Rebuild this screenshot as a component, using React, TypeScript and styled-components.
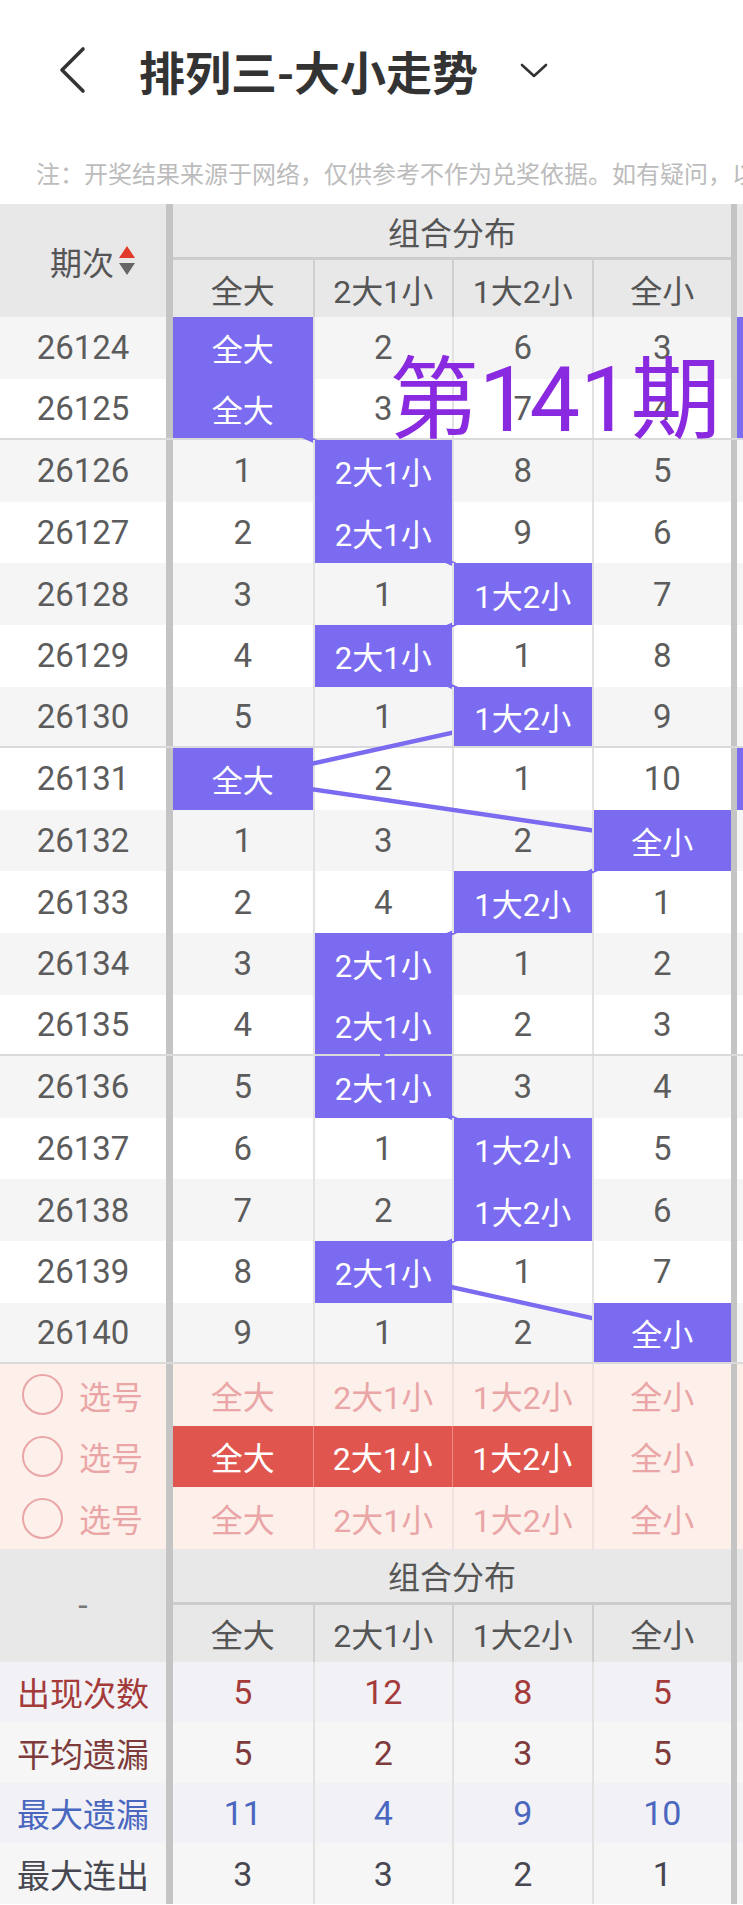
import styled, { createGlobalStyle } from 'styled-components';

const GlobalStyle = createGlobalStyle`
  html, body {
    margin: 0;
    padding: 0;
    background: #fff;
  }
  body {
    font-family: Roboto, "Noto Sans CJK SC", sans-serif;
  }
`;

const ROW_H = 61.6;
const COLS = '173px repeat(4, 139.5px) 146px';
const COL_X = [173, 312.5, 452, 591.5];
const COL_W = 139.5;
const PURPLE = '#7a6bf0';
const LABELS = ['全大', '2大1小', '1大2小', '全小'];

type Row = { no: number; vals: (number | string)[]; hit: number; next?: boolean };

const rows: Row[] = [
  { no: 26124, vals: ['全大', 2, 6, 3], hit: 0, next: true },
  { no: 26125, vals: ['全大', 3, 7, 4], hit: 0, next: true },
  { no: 26126, vals: [1, '2大1小', 8, 5], hit: 1 },
  { no: 26127, vals: [2, '2大1小', 9, 6], hit: 1 },
  { no: 26128, vals: [3, 1, '1大2小', 7], hit: 2 },
  { no: 26129, vals: [4, '2大1小', 1, 8], hit: 1 },
  { no: 26130, vals: [5, 1, '1大2小', 9], hit: 2 },
  { no: 26131, vals: ['全大', 2, 1, 10], hit: 0, next: true },
  { no: 26132, vals: [1, 3, 2, '全小'], hit: 3 },
  { no: 26133, vals: [2, 4, '1大2小', 1], hit: 2 },
  { no: 26134, vals: [3, '2大1小', 1, 2], hit: 1 },
  { no: 26135, vals: [4, '2大1小', 2, 3], hit: 1 },
  { no: 26136, vals: [5, '2大1小', 3, 4], hit: 1 },
  { no: 26137, vals: [6, 1, '1大2小', 5], hit: 2 },
  { no: 26138, vals: [7, 2, '1大2小', 6], hit: 2 },
  { no: 26139, vals: [8, '2大1小', 1, 7], hit: 1 },
  { no: 26140, vals: [9, 1, 2, '全小'], hit: 3 },
];

const picks = [[], [0, 1, 2], []] as number[][];

const stats = [
  { label: '出现次数', vals: [5, 12, 8, 5], color: '#a43a3a', bg: '#f1f1f6' },
  { label: '平均遗漏', vals: [5, 2, 3, 5], color: '#7e3b3b', bg: '#f6f6f6' },
  { label: '最大遗漏', vals: [11, 4, 9, 10], color: '#4a67c0', bg: '#f1f1f6' },
  { label: '最大连出', vals: [3, 3, 2, 1], color: '#474752', bg: '#f6f6f6' },
];

const Page = styled.div`
  position: relative;
  width: 743px;
  height: 1905px;
  overflow: hidden;
  background: #fff;
`;

const NavBar = styled.div`
  display: flex;
  align-items: center;
  height: 140px;
  padding-left: 57px;
`;

const Title = styled.h1`
  margin: 0 0 0 52px;
  font-family: "Noto Sans CJK SC", sans-serif;
  font-size: 46px;
  font-weight: 700;
  color: #333;
`;

const Caret = styled.svg`
  margin-left: 42px;
`;

const Notice = styled.div`
  display: flex;
  align-items: center;
  height: 64px;
  padding-left: 36px;
  font-family: "Noto Sans CJK SC", sans-serif;
  font-size: 24px;
  color: #bcbcbc;
  white-space: nowrap;
`;

const Table = styled.div`
  width: 877px;
`;

const HeadGrid = styled.div`
  display: grid;
  grid-template-columns: ${COLS};
  grid-template-rows: 56px 57px;
  background: #e8e8e8;
  color: #555;
  font-size: 32px;
`;

const Corner = styled.div`
  grid-row: span 2;
  display: flex;
  align-items: center;
  justify-content: center;
  gap: 4px;
  padding-left: 20px;
  border-right: 7px solid #c4c4c4;
`;

const Dash = styled.span`
  color: #777;
  font-size: 34px;
  padding-right: 20px;
`;

const GroupTitle = styled.div`
  grid-column: span 4;
  display: flex;
  align-items: center;
  justify-content: center;
  border-bottom: 3px solid #cdcdcd;
`;

const NextHead = styled.div`
  grid-row: span 2;
  border-left: 6px solid #c4c4c4;
`;

const SubHead = styled.div<{ $first?: boolean }>`
  display: flex;
  align-items: center;
  justify-content: center;
  border-left: ${({ $first }) => ($first ? 'none' : '2px solid #cfcfcf')};
`;

const Body = styled.div`
  position: relative;
`;

const Lines = styled.svg`
  position: absolute;
  top: 0;
  left: 0;
  z-index: 1;
  pointer-events: none;
`;

const DataRow = styled.div<{ $alt: boolean; $split: boolean }>`
  display: grid;
  grid-template-columns: ${COLS};
  height: ${ROW_H}px;
  box-sizing: border-box;
  background: ${({ $alt }) => ($alt ? '#fff' : '#f5f5f5')};
  border-bottom: ${({ $split }) => ($split ? '2px solid #dadada' : 'none')};
  font-size: 33px;
  color: #5c5c5c;
`;

const Period = styled.div`
  display: flex;
  align-items: center;
  justify-content: center;
  border-right: 7px solid #c4c4c4;
`;

const Cell = styled.div<{ $first?: boolean; $hit?: boolean }>`
  display: flex;
  align-items: center;
  justify-content: center;
  border-left: ${({ $first }) => ($first ? 'none' : '2px solid #e2e2e2')};
  ${({ $hit }) =>
    $hit &&
    `
    position: relative;
    z-index: 2;
    background: ${PURPLE};
    color: #fff;
    font-size: 31px;
  `}
`;

const NextCell = styled.div<{ $hit?: boolean }>`
  border-left: 6px solid #c4c4c4;
  background: ${({ $hit }) => ($hit ? PURPLE : 'transparent')};
`;

const PickRow = styled.div`
  display: grid;
  grid-template-columns: ${COLS};
  height: ${ROW_H}px;
  background: #fdf0eb;
  font-size: 32px;
  color: #eaa6a6;
`;

const PickLabel = styled.div`
  display: flex;
  align-items: center;
  gap: 16px;
  padding-left: 22px;
  border-right: 7px solid #c4c4c4;
  font-family: "Noto Sans CJK SC", sans-serif;
`;

const Ring = styled.span`
  width: 37px;
  height: 37px;
  border: 2px solid #eaa6a6;
  border-radius: 50%;
`;

const PickCell = styled.div<{ $first?: boolean; $on?: boolean }>`
  display: flex;
  align-items: center;
  justify-content: center;
  border-left: ${({ $first, $on }) =>
    $first ? 'none' : $on ? '1px solid #f08a84' : '2px solid #efe2de'};
  background: ${({ $on }) => ($on ? '#e0564f' : 'transparent')};
  color: ${({ $on }) => ($on ? '#fff' : 'inherit')};
`;

const StatRow = styled.div<{ $bg: string; $color: string }>`
  display: grid;
  grid-template-columns: ${COLS};
  height: 60.5px;
  background: ${({ $bg }) => $bg};
  color: ${({ $color }) => $color};
  font-size: 34px;
`;

const StatLabel = styled.div`
  display: flex;
  align-items: center;
  justify-content: center;
  border-right: 7px solid #c4c4c4;
  font-family: "Noto Sans CJK SC", sans-serif;
  font-size: 33px;
`;

const Watermark = styled.div`
  position: absolute;
  top: 356px;
  left: 389px;
  z-index: 5;
  font-size: 90px;
  line-height: 1;
  color: #8a2ae0;
  white-space: nowrap;
`;

const SortArrows = () => (
  <svg width="18" height="32" viewBox="0 0 18 32">
    <path d="M9 1 L17 13 L1 13 Z" fill="#e23a2a" />
    <path d="M1 18 L17 18 L9 30 Z" fill="#666" />
  </svg>
);

const TableHead = ({ corner }: { corner: React.ReactNode }) => (
  <HeadGrid>
    <Corner>{corner}</Corner>
    <GroupTitle>组合分布</GroupTitle>
    <NextHead />
    {LABELS.map((l, i) => (
      <SubHead key={l} $first={i === 0}>
        {l}
      </SubHead>
    ))}
  </HeadGrid>
);

const center = (i: number, c: number) => ({
  x: COL_X[c] + COL_W / 2,
  y: i * ROW_H + ROW_H / 2,
});

export default function App() {
  const points = rows.map((r, i) => center(i, r.hit));

  return (
    <Page>
      <GlobalStyle />
      <NavBar>
        <svg width="30" height="48" viewBox="0 0 30 48">
          <path d="M26 3 L5 24 L26 45" fill="none" stroke="#333" strokeWidth="3.6" strokeLinecap="round" strokeLinejoin="round" />
        </svg>
        <Title>排列三-大小走势</Title>
        <Caret width="28" height="16" viewBox="0 0 28 16">
          <path d="M2 3 L14 14 L26 3" fill="none" stroke="#333" strokeWidth="2.6" strokeLinecap="round" strokeLinejoin="round" />
        </Caret>
      </NavBar>
      <Notice>注：开奖结果来源于网络，仅供参考不作为兑奖依据。如有疑问，以官方公告为准。</Notice>

      <Table>
        <TableHead
          corner={
            <>
              <span>期次</span>
              <SortArrows />
            </>
          }
        />
        <Body>
          <Lines width="877" height={rows.length * ROW_H}>
            <polyline
              points={points.map((p) => `${p.x},${p.y}`).join(' ')}
              fill="none"
              stroke={PURPLE}
              strokeWidth="4.5"
              strokeLinejoin="round"
            />
          </Lines>
          {rows.map((r, i) => (
            <DataRow key={r.no} $alt={i % 2 === 1} $split={r.no % 5 === 0}>
              <Period>{r.no}</Period>
              {r.vals.map((v, c) => (
                <Cell key={c} $first={c === 0} $hit={c === r.hit}>
                  {v}
                </Cell>
              ))}
              <NextCell $hit={r.next} />
            </DataRow>
          ))}
        </Body>

        {picks.map((on, i) => (
          <PickRow key={i}>
            <PickLabel>
              <Ring />
              <span>选号</span>
            </PickLabel>
            {LABELS.map((l, c) => (
              <PickCell key={l} $first={c === 0} $on={on.includes(c)}>
                {l}
              </PickCell>
            ))}
            <NextCell />
          </PickRow>
        ))}

        <TableHead corner={<Dash>-</Dash>} />

        {stats.map((s) => (
          <StatRow key={s.label} $bg={s.bg} $color={s.color}>
            <StatLabel>{s.label}</StatLabel>
            {s.vals.map((v, c) => (
              <Cell key={c} $first={c === 0}>
                {v}
              </Cell>
            ))}
            <NextCell />
          </StatRow>
        ))}
      </Table>

      <Watermark>第141期</Watermark>
    </Page>
  );
}
